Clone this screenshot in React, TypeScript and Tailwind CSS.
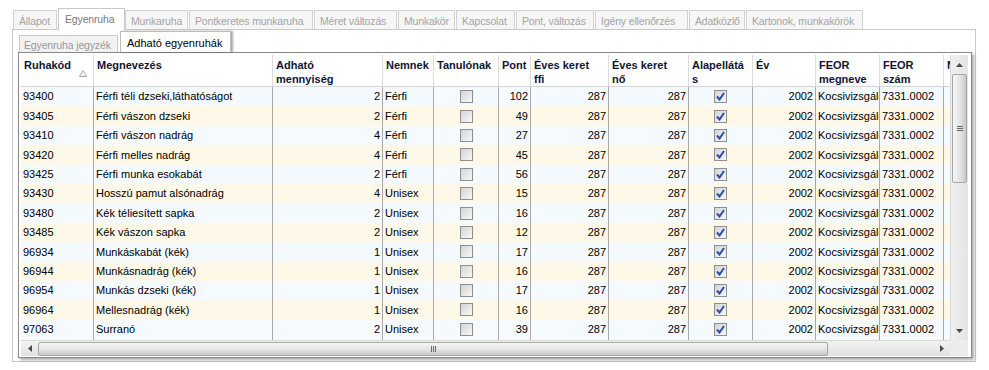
import React from 'react';

type Col = { w: string; head: string[]; kind: 'text' | 'num' | 'check' };

const COLS: Col[] = [
  { w: 'w-[73px]', head: ['Ruhakód'], kind: 'text' },
  { w: 'w-[179px]', head: ['Megnevezés'], kind: 'text' },
  { w: 'w-[110px]', head: ['Adható', 'mennyiség'], kind: 'num' },
  { w: 'w-[51px]', head: ['Nemnek'], kind: 'text' },
  { w: 'w-[65px]', head: ['Tanulónak'], kind: 'check' },
  { w: 'w-[32px]', head: ['Pont'], kind: 'num' },
  { w: 'w-[78px]', head: ['Éves keret', 'ffi'], kind: 'num' },
  { w: 'w-[80px]', head: ['Éves keret', 'nő'], kind: 'num' },
  { w: 'w-[64px]', head: ['Alapellátá', 's'], kind: 'check' },
  { w: 'w-[63px]', head: ['Év'], kind: 'num' },
  { w: 'w-[64px]', head: ['FEOR', 'megneve'], kind: 'text' },
  { w: 'w-[64px]', head: ['FEOR', 'szám'], kind: 'text' },
  { w: 'w-[40px]', head: ['Megj'], kind: 'text' },
];

const DATA: [string, string, number, string, number][] = [
  ['93400', 'Férfi téli dzseki,láthatóságot', 2, 'Férfi', 102],
  ['93405', 'Férfi vászon dzseki', 2, 'Férfi', 49],
  ['93410', 'Férfi vászon nadrág', 4, 'Férfi', 27],
  ['93420', 'Férfi melles nadrág', 4, 'Férfi', 45],
  ['93425', 'Férfi munka esokabát', 2, 'Férfi', 56],
  ['93430', 'Hosszú pamut alsónadrág', 4, 'Unisex', 15],
  ['93480', 'Kék téliesített sapka', 2, 'Unisex', 16],
  ['93485', 'Kék vászon sapka', 2, 'Unisex', 12],
  ['96934', 'Munkáskabát (kék)', 1, 'Unisex', 17],
  ['96944', 'Munkásnadrág (kék)', 1, 'Unisex', 16],
  ['96954', 'Munkás dzseki (kék)', 1, 'Unisex', 17],
  ['96964', 'Mellesnadrág (kék)', 1, 'Unisex', 16],
  ['97063', 'Surranó', 2, 'Unisex', 39],
  ['97070', 'Bakancs', 1, 'Unisex', 30],
];

const TOP_TABS: [string, string][] = [
  ['Állapot', 'w-[44px]'],
  ['Egyenruha', 'w-[67px]'],
  ['Munkaruha', 'w-[63px]'],
  ['Pontkeretes munkaruha', 'w-[124px]'],
  ['Méret változás', 'w-[83px]'],
  ['Munkakör', 'w-[57px]'],
  ['Kapcsolat', 'w-[59px]'],
  ['Pont, változás', 'w-[78px]'],
  ['Igény ellenőrzés', 'w-[93px]'],
  ['Adatközlő', 'w-[56px]'],
  ['Kartonok, munkakörök', 'w-[117px]'],
];

function CheckBox({ checked }: { checked: boolean }) {
  return (
    <div className="w-[13px] h-[13px] border border-[#8e8f8f] bg-gradient-to-br from-[#d4d4d4] to-[#f8f8f8] flex items-center justify-center">
      {checked && (
        <svg width="9" height="9" viewBox="0 0 9 9">
          <path d="M1 4.5 L3.5 7.5 L8 1" fill="none" stroke="#2a4da8" strokeWidth="2" />
        </svg>
      )}
    </div>
  );
}

function Cell({ col, value }: { col: Col; value: string | boolean }) {
  const base = `${col.w} shrink-0 h-full border-r border-[#a9a9a9] overflow-hidden whitespace-nowrap flex items-center`;
  if (col.kind === 'check') {
    return (
      <div className={`${base} justify-center`}>
        <CheckBox checked={value === true} />
      </div>
    );
  }
  if (col.kind === 'num') {
    return <div className={`${base} justify-end pr-[2px]`}>{value as string}</div>;
  }
  return <div className={`${base} pl-[2px]`}>{value as string}</div>;
}

function ArrowUp() {
  return (
    <svg width="7" height="4" viewBox="0 0 7 4">
      <path d="M0 4 L3.5 0 L7 4 Z" fill="#4a4a4a" />
    </svg>
  );
}

function ArrowDown() {
  return (
    <svg width="7" height="4" viewBox="0 0 7 4">
      <path d="M0 0 L3.5 4 L7 0 Z" fill="#4a4a4a" />
    </svg>
  );
}

function ArrowLeft() {
  return (
    <svg width="4" height="7" viewBox="0 0 4 7">
      <path d="M4 0 L0 3.5 L4 7 Z" fill="#4a4a4a" />
    </svg>
  );
}

function ArrowRight() {
  return (
    <svg width="4" height="7" viewBox="0 0 4 7">
      <path d="M0 0 L4 3.5 L0 7 Z" fill="#4a4a4a" />
    </svg>
  );
}

export default function App() {
  return (
    <div className="w-[989px] h-[370px] bg-white font-['Liberation_Sans',Arial,sans-serif] text-[11px] text-black overflow-hidden">
      {/* outer tab strip */}
      <div className="flex items-end h-[29px] pl-[13px] text-[10.5px] tracking-[-0.15px]">
        {TOP_TABS.map(([label, w]) =>
          label === 'Egyenruha' ? (
            <div
              key={label}
              className={`${w} h-[22px] -mb-px z-10 bg-white border border-b-0 border-[#c9c9c9] text-[#7a7a7a] pl-[6px] pt-[3px] whitespace-nowrap`}
            >
              {label}
            </div>
          ) : (
            <div
              key={label}
              className={`${w} h-[19px] mr-px bg-[#f6f6f6] border border-b-0 border-[#d2d2d2] text-[#a4a4a4] pl-[5px] pt-[3px] whitespace-nowrap overflow-hidden`}
            >
              {label}
            </div>
          )
        )}
      </div>

      {/* outer panel */}
      <div className="ml-[12px] w-[964px] h-[333px] border border-[#c9c9c9] bg-white pl-[5px]">
        {/* inner tab strip */}
        <div className="flex items-end h-[22px] pl-[1px] text-[10.5px] tracking-[-0.15px]">
          <div className="w-[99px] h-[17px] bg-[#f2f2f2] border border-b-0 border-[#c9c9c9] text-[#9a9a9a] pl-[4px] pt-[2px] whitespace-nowrap overflow-hidden">
            Egyenruha jegyzék
          </div>
          <div className="w-[111px] h-[21px] ml-[2px] bg-white border border-b-0 border-[#bdbdbd] shadow-[2px_0_2px_rgba(0,0,0,0.35)] pl-[6px] pt-[3px] whitespace-nowrap text-[11px] tracking-normal">
            Adható egyenruhák
          </div>
        </div>

        {/* grid frame */}
        <div className="w-[954px] h-[306px] border border-[#8a8a8a] bg-white pt-[2px] pl-[2px] pr-[3px] pb-[1px] shadow-[2px_2px_3px_rgba(0,0,0,0.35)]">
          <div className="flex h-full">
            {/* columns + hscroll */}
            <div className="w-[929px] h-full flex flex-col">
              <div className="h-[285px] overflow-hidden">
                {/* header */}
                <div className="flex h-[32px] bg-white border-b border-[#d6d6d6] font-bold text-[#101434] leading-[14px]">
                  {COLS.map((c, i) => (
                    <div
                      key={i}
                      className={`${c.w} shrink-0 h-full border-r border-[#dcdcdc] pl-[3px] pt-[3px] overflow-hidden whitespace-nowrap relative`}
                    >
                      {c.head.map((h, j) => (
                        <div key={j}>{h}</div>
                      ))}
                      {i === 0 && (
                        <svg className="absolute left-[58px] top-[15px]" width="8" height="7" viewBox="0 0 8 7">
                          <path d="M4 0.5 L7.5 6.5 L0.5 6.5 Z" fill="none" stroke="#a8a8a8" strokeWidth="1" />
                        </svg>
                      )}
                    </div>
                  ))}
                </div>
                {/* body */}
                {DATA.map((r, i) => {
                  const values: (string | boolean)[] = [
                    r[0],
                    r[1],
                    String(r[2]),
                    r[3],
                    false,
                    String(r[4]),
                    '287',
                    '287',
                    true,
                    '2002',
                    'Kocsivizsgáló',
                    '7331.0002',
                    '',
                  ];
                  return (
                    <div
                      key={r[0]}
                      className={`flex h-[19.4px] ${i % 2 === 0 ? 'bg-[#f5fafe]' : 'bg-[#fef8e9]'}`}
                    >
                      {COLS.map((c, j) => (
                        <Cell key={j} col={c} value={values[j]} />
                      ))}
                    </div>
                  );
                })}
              </div>
              {/* horizontal scrollbar */}
              <div className="h-[16px] flex items-center bg-gradient-to-b from-[#f2f2f2] to-[#e2e2e2] border-t border-[#d8d8d8]">
                <div className="w-[17px] flex justify-center">
                  <ArrowLeft />
                </div>
                <div className="w-[790px] h-[14px] rounded-[2px] border border-[#a6a6a6] bg-gradient-to-b from-[#f7f7f7] via-[#e6e6e6] to-[#c9c9c9] flex items-center justify-center gap-[1px]">
                  <div className="w-px h-[6px] bg-[#6a6a6a]" />
                  <div className="w-px h-[6px] bg-[#6a6a6a]" />
                  <div className="w-px h-[6px] bg-[#6a6a6a]" />
                </div>
                <div className="flex-1 flex justify-end pr-[6px]">
                  <ArrowRight />
                </div>
              </div>
            </div>

            {/* vertical scrollbar + corner */}
            <div className="w-[18px] h-full flex flex-col">
              <div className="h-[285px] flex flex-col items-center bg-gradient-to-r from-[#f0f0f0] to-[#e4e4e4] border-l border-[#d8d8d8]">
                <div className="h-[19px] flex items-center">
                  <ArrowUp />
                </div>
                <div className="w-[15px] h-[109px] rounded-[2px] border border-[#a6a6a6] bg-gradient-to-r from-[#f7f7f7] via-[#e6e6e6] to-[#c9c9c9] flex flex-col items-center justify-center gap-[1px]">
                  <div className="w-[6px] h-px bg-[#6a6a6a]" />
                  <div className="w-[6px] h-px bg-[#6a6a6a]" />
                  <div className="w-[6px] h-px bg-[#6a6a6a]" />
                </div>
                <div className="flex-1 flex items-end pb-[7px]">
                  <ArrowDown />
                </div>
              </div>
              <div className="h-[16px] bg-[#ececec]" />
            </div>
          </div>
        </div>
      </div>
    </div>
  );
}
